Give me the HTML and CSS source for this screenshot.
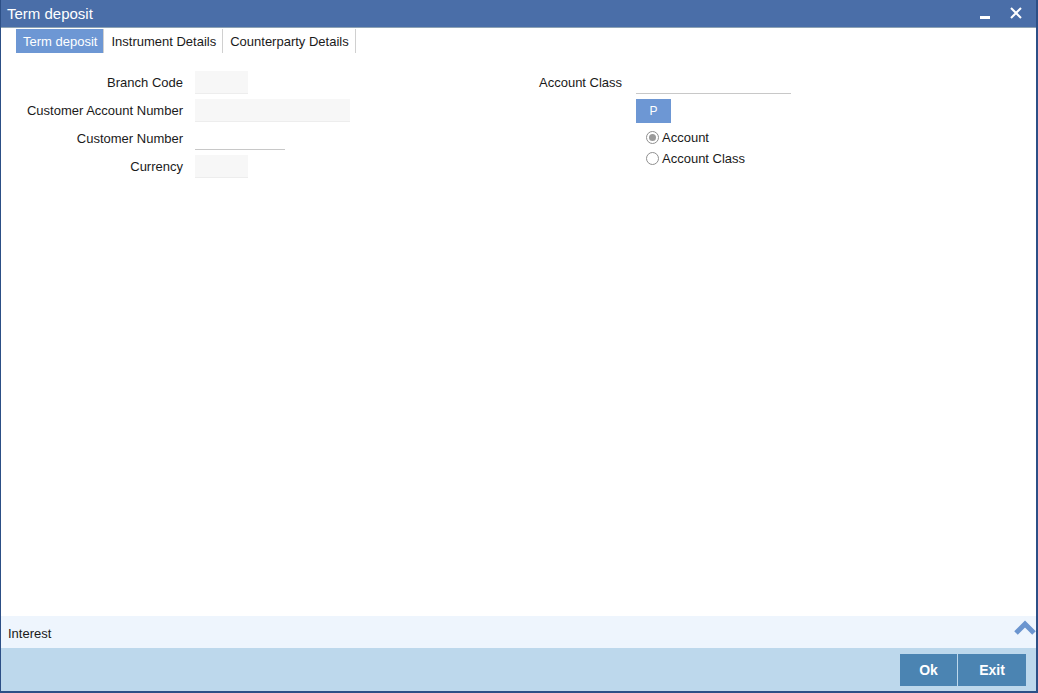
FILE: index.html
```html
<!DOCTYPE html>
<html>
<head>
<meta charset="utf-8">
<link rel="stylesheet" href="styles.css">
</head>
<body>
<div class="window">
  <div class="titlebar">
    <span class="title">Term deposit</span>
    <div class="controls">
      <span class="minimize"></span>
      <svg class="close" width="12" height="12" viewBox="0 0 12 12"><path d="M1 1 L11 11 M11 1 L1 11" stroke="#fff" stroke-width="2"/></svg>
    </div>
  </div>
  <div class="tabs">
    <div class="tab active">Term deposit</div>
    <div class="tab">Instrument Details</div>
    <div class="tab">Counterparty Details</div>
  </div>
  <div class="content">
    <div class="col left">
      <div class="row"><label>Branch Code</label><div class="input small"></div></div>
      <div class="row"><label>Customer Account Number</label><div class="input wide"></div></div>
      <div class="row"><label>Customer Number</label><div class="input line mid"></div></div>
      <div class="row"><label>Currency</label><div class="input small"></div></div>
    </div>
    <div class="col right">
      <div class="row"><label class="rlabel">Account Class</label><div class="input line wide"></div></div>
      <div class="rblock">
        <div class="pbtn">P</div>
        <div class="radio"><span class="circle checked"></span>Account</div>
        <div class="radio"><span class="circle"></span>Account Class</div>
      </div>
    </div>
  </div>
  <div class="interest">
    <span>Interest</span>
    <svg class="chev" width="22" height="16" viewBox="0 0 22 16"><path d="M2 14 L11 5 L20 14" stroke="#6b95cf" stroke-width="5" fill="none"/></svg>
  </div>
  <div class="footer">
    <div class="btn">Ok</div>
    <div class="btn exit">Exit</div>
  </div>
</div>
</body>
</html>
```
FILE: styles.css
```css
* { box-sizing: border-box; }
html, body { margin: 0; padding: 0; }
body {
  width: 1038px;
  height: 693px;
  font-family: "Liberation Sans", Arial, sans-serif;
  font-size: 13px;
  color: #1a1a1a;
  background: #fff;
}
.window {
  width: 1038px;
  height: 693px;
  border-left: 1px solid #2c4f86;
  border-right: 2px solid #2c4f86;
  border-bottom: 2px solid #2c4f86;
  display: flex;
  flex-direction: column;
  background: #fff;
}
.titlebar {
  height: 28px;
  background: #4a6ea8;
  border-bottom: 1px solid #8ea3b4;
  display: flex;
  align-items: center;
  justify-content: space-between;
  padding-left: 6px;
  padding-right: 14px;
  flex: none;
}
.title { color: #fff; font-size: 15px; }
.controls { display: flex; align-items: center; gap: 20px; margin-top: -2px; }
.minimize { width: 10px; height: 3px; background: #fff; margin-top: 9px; }
.tabs {
  display: flex;
  padding-left: 15px;
  margin-top: 1px;
  height: 24px;
  flex: none;
}
.tab {
  padding: 0 6px 0 7px;
  line-height: 25px;
  font-size: 13px;
  border-right: 1px solid #d0d0d0;
}
.tab.active { background: #6d97d4; color: #fff; }
.content {
  flex: 1;
  display: flex;
  padding-top: 18px;
}
.col { display: flex; flex-direction: column; gap: 5px; }
.left { width: 538px; }
.row { display: flex; align-items: center; height: 23px; }
.left label { width: 182px; text-align: right; margin-right: 12px; }
.rlabel { width: 86px; margin-right: 11px; }
.input { height: 23px; background: #f7f7f7; border-bottom: 1px solid #ededed; }
.input.small { width: 53px; }
.input.wide { width: 155px; }
.input.mid { width: 90px; }
.input.line { background: #fff; border-bottom: 1px solid #c8c8c8; }
.rblock { padding-left: 97px; display: flex; flex-direction: column; }
.pbtn {
  width: 35px; height: 24px; background: #6d97d4; color: #fff;
  display: flex; align-items: center; justify-content: center;
  font-size: 12px; margin-bottom: 4px;
}
.radio { display: flex; align-items: center; height: 21px; padding-left: 10px; font-size: 13px; }
.circle {
  width: 13px; height: 13px; border-radius: 50%;
  border: 1px solid #8f8f8f; background: #fff;
  margin-right: 3px; position: relative;
}
.circle.checked::after {
  content: ""; position: absolute; left: 2px; top: 2px;
  width: 7px; height: 7px; border-radius: 50%; background: #9a9a9a;
}
.interest {
  height: 32px; background: #eef5fd; flex: none;
  display: flex; align-items: center; justify-content: space-between;
  padding-left: 7px; padding-right: 0;
}
.interest span { margin-top: 2px; }
.chev { margin-top: -11px; }
.footer {
  height: 43px; flex: none; background: #bdd8ec;
  display: flex; justify-content: flex-end; align-items: flex-start;
  padding-top: 6px; padding-right: 10px; gap: 1px;
}
.btn {
  width: 57px; height: 32px; background: #4b84b2; color: #fff;
  font-weight: bold; font-size: 14px;
  display: flex; align-items: center; justify-content: center;
}
.btn.exit { width: 68px; }
```
